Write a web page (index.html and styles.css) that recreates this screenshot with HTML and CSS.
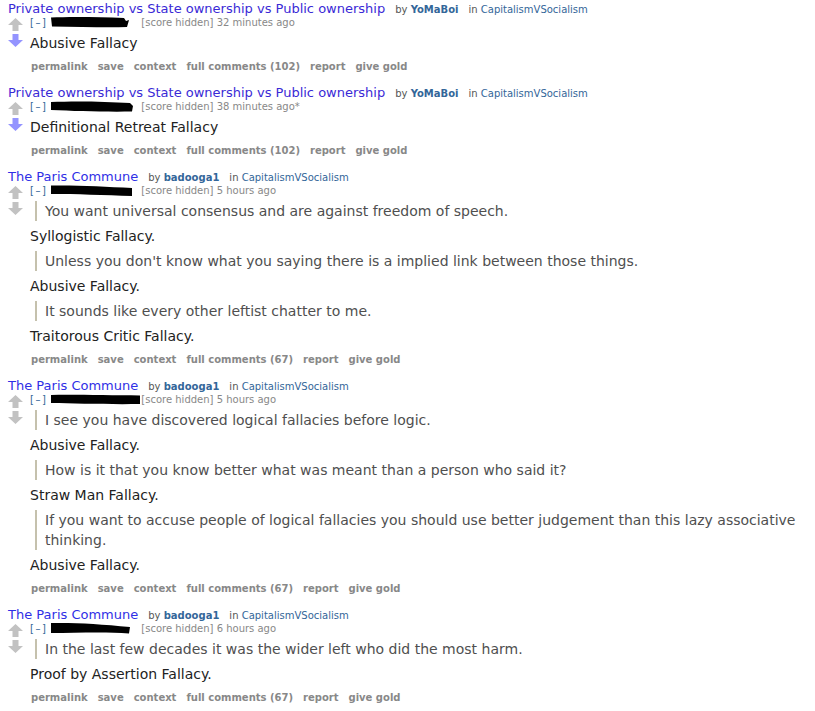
FILE: index.html
```html
<!DOCTYPE html>
<html>
<head>
<meta charset="utf-8">
<link rel="stylesheet" href="styles.css">
</head>
<body>
<div class="list">

  <div class="entry">
    <div class="parent"><a class="title visited" href="#">Private ownership vs State ownership vs Public ownership</a><span class="by">by <b class="author">YoMaBoi</b></span><span class="in">in <span class="sub">CapitalismVSocialism</span></span></div>
    <div class="thing">
      <div class="midcol">
        <svg class="arrow" width="15" height="13" viewBox="0 0 15 13"><polygon class="up" points="7.5,0 15,7 10.5,7 10.5,13 4.5,13 4.5,7 0,7"/></svg>
        <svg class="arrow" width="15" height="13" viewBox="0 0 15 13"><polygon class="down voted" points="4.5,0 10.5,0 10.5,6 15,6 7.5,13 0,6 4.5,6"/></svg>
      </div>
      <div class="comment">
        <div class="tagline"><span class="expand">[–]</span><svg class="redact" width="84" height="12" viewBox="0 0 84 12"><path d="M1,1.5 C20,0.5 50,1 74,2 L76,5 L79,4 L77,11 C55,12 30,10.5 2,10.5 Z"/></svg><span class="hidden">[score hidden]</span> <span class="time">32 minutes ago</span></div>
        <div class="md"><p>Abusive Fallacy</p></div>
        <ul class="buttons"><li>permalink</li><li>save</li><li>context</li><li>full comments (102)</li><li>report</li><li>give gold</li></ul>
      </div>
    </div>
  </div>

  <div class="entry">
    <div class="parent"><a class="title visited" href="#">Private ownership vs State ownership vs Public ownership</a><span class="by">by <b class="author">YoMaBoi</b></span><span class="in">in <span class="sub">CapitalismVSocialism</span></span></div>
    <div class="thing">
      <div class="midcol">
        <svg class="arrow" width="15" height="13" viewBox="0 0 15 13"><polygon class="up" points="7.5,0 15,7 10.5,7 10.5,13 4.5,13 4.5,7 0,7"/></svg>
        <svg class="arrow" width="15" height="13" viewBox="0 0 15 13"><polygon class="down voted" points="4.5,0 10.5,0 10.5,6 15,6 7.5,13 0,6 4.5,6"/></svg>
      </div>
      <div class="comment">
        <div class="tagline"><span class="expand">[–]</span><svg class="redact" width="84" height="12" viewBox="0 0 84 12"><path d="M1,2 C25,1 55,1.5 80,3 L83,6 L82,11.5 C55,12 25,11 1,10 Z"/></svg><span class="hidden">[score hidden]</span> <span class="time">38 minutes ago*</span></div>
        <div class="md"><p>Definitional Retreat Fallacy</p></div>
        <ul class="buttons"><li>permalink</li><li>save</li><li>context</li><li>full comments (102)</li><li>report</li><li>give gold</li></ul>
      </div>
    </div>
  </div>

  <div class="entry">
    <div class="parent"><a class="title" href="#">The Paris Commune</a><span class="by">by <b class="author">badooga1</b></span><span class="in">in <span class="sub">CapitalismVSocialism</span></span></div>
    <div class="thing">
      <div class="midcol">
        <svg class="arrow" width="15" height="13" viewBox="0 0 15 13"><polygon class="up" points="7.5,0 15,7 10.5,7 10.5,13 4.5,13 4.5,7 0,7"/></svg>
        <svg class="arrow" width="15" height="13" viewBox="0 0 15 13"><polygon class="down" points="4.5,0 10.5,0 10.5,6 15,6 7.5,13 0,6 4.5,6"/></svg>
      </div>
      <div class="comment">
        <div class="tagline"><span class="expand">[–]</span><svg class="redact" width="84" height="12" viewBox="0 0 84 12"><path d="M1,1.5 C25,1 55,2.5 82,4 L82,12 C55,11 25,10 1,10 Z"/></svg><span class="hidden">[score hidden]</span> <span class="time">5 hours ago</span></div>
        <div class="md">
          <blockquote><p>You want universal consensus and are against freedom of speech.</p></blockquote>
          <p>Syllogistic Fallacy.</p>
          <blockquote><p>Unless you don't know what you saying there is a implied link between those things.</p></blockquote>
          <p>Abusive Fallacy.</p>
          <blockquote><p>It sounds like every other leftist chatter to me.</p></blockquote>
          <p>Traitorous Critic Fallacy.</p>
        </div>
        <ul class="buttons"><li>permalink</li><li>save</li><li>context</li><li>full comments (67)</li><li>report</li><li>give gold</li></ul>
      </div>
    </div>
  </div>

  <div class="entry">
    <div class="parent"><a class="title" href="#">The Paris Commune</a><span class="by">by <b class="author">badooga1</b></span><span class="in">in <span class="sub">CapitalismVSocialism</span></span></div>
    <div class="thing">
      <div class="midcol">
        <svg class="arrow" width="15" height="13" viewBox="0 0 15 13"><polygon class="up" points="7.5,0 15,7 10.5,7 10.5,13 4.5,13 4.5,7 0,7"/></svg>
        <svg class="arrow" width="15" height="13" viewBox="0 0 15 13"><polygon class="down" points="4.5,0 10.5,0 10.5,6 15,6 7.5,13 0,6 4.5,6"/></svg>
      </div>
      <div class="comment">
        <div class="tagline"><span class="expand">[–]</span><svg class="redact tight" width="90" height="12" viewBox="0 0 90 12"><path d="M1,2 C25,1.5 60,2.5 90,2.5 L90,11 C60,11.5 25,10.5 1,10 Z"/></svg><span class="hidden">[score hidden]</span> <span class="time">5 hours ago</span></div>
        <div class="md">
          <blockquote><p>I see you have discovered logical fallacies before logic.</p></blockquote>
          <p>Abusive Fallacy.</p>
          <blockquote><p>How is it that you know better what was meant than a person who said it?</p></blockquote>
          <p>Straw Man Fallacy.</p>
          <blockquote><p>If you want to accuse people of logical fallacies you should use better judgement than this lazy associative thinking.</p></blockquote>
          <p>Abusive Fallacy.</p>
        </div>
        <ul class="buttons"><li>permalink</li><li>save</li><li>context</li><li>full comments (67)</li><li>report</li><li>give gold</li></ul>
      </div>
    </div>
  </div>

  <div class="entry">
    <div class="parent"><a class="title" href="#">The Paris Commune</a><span class="by">by <b class="author">badooga1</b></span><span class="in">in <span class="sub">CapitalismVSocialism</span></span></div>
    <div class="thing">
      <div class="midcol">
        <svg class="arrow" width="15" height="13" viewBox="0 0 15 13"><polygon class="up" points="7.5,0 15,7 10.5,7 10.5,13 4.5,13 4.5,7 0,7"/></svg>
        <svg class="arrow" width="15" height="13" viewBox="0 0 15 13"><polygon class="down" points="4.5,0 10.5,0 10.5,6 15,6 7.5,13 0,6 4.5,6"/></svg>
      </div>
      <div class="comment">
        <div class="tagline"><span class="expand">[–]</span><svg class="redact" width="84" height="12" viewBox="0 0 84 12"><path d="M1,1 C25,0.5 50,2 80,5 L79,11.5 C55,9.5 25,11 1,11 Z"/></svg><span class="hidden">[score hidden]</span> <span class="time">6 hours ago</span></div>
        <div class="md">
          <blockquote><p>In the last few decades it was the wider left who did the most harm.</p></blockquote>
          <p>Proof by Assertion Fallacy.</p>
        </div>
        <ul class="buttons"><li>permalink</li><li>save</li><li>context</li><li>full comments (67)</li><li>report</li><li>give gold</li></ul>
      </div>
    </div>
  </div>

</div>
</body>
</html>
```

FILE: styles.css
```css
* { box-sizing: border-box; }
html, body { margin: 0; padding: 0; background: #fff; }
body {
  font-family: "DejaVu Sans", Verdana, sans-serif;
  color: #222;
}
.list { padding: 0 10px 0 8px; }
.entry { margin-bottom: 11px; }
.parent {
  height: 16px;
  line-height: 16px;
  white-space: nowrap;
}
.title {
  font-size: 13px;
  color: #2f2fe6;
  text-decoration: none;
  margin-right: 10px;
}
.title.visited { color: #3a2ad6; }
.by, .in { font-size: 10px; color: #555; margin-right: 10px; }
.author { color: #369; font-weight: bold; }
.sub { color: #369; }
.thing { display: flex; }
.midcol {
  width: 22px;
  flex: none;
  display: flex;
  flex-direction: column;
  gap: 3px;
  padding-top: 2px;
}
.arrow { display: block; }
.up, .down { fill: #c2c2c2; }
.down.voted { fill: #9494ff; }
.comment { flex: 1; min-width: 0; }
.tagline {
  font-size: 10px;
  line-height: 12px;
  height: 12px;
  color: #888;
  white-space: nowrap;
}
.expand { color: #369; letter-spacing: 1.5px; margin-right: 3px; }
.redact {
  display: inline-block;
  vertical-align: -2px;
  margin-right: 7px;
}
.redact.tight { margin-right: 1px; }
.redact path { fill: #000; }
.md { margin-top: 5px; font-size: 14px; line-height: 20px; }
.md p { margin: 0; }
.md > p + *, .md > blockquote + * { margin-top: 5px; }
blockquote {
  margin: 0 0 0 5px;
  padding-left: 8px;
  border-left: 2px solid #c5c1ad;
  color: #4f4f4f;
}
.buttons {
  list-style: none;
  margin: 8px 0 0 1px;
  padding: 0;
  display: flex;
  gap: 10px;
  font-size: 10px;
  line-height: 12px;
  font-weight: bold;
  color: #888;
}
```
